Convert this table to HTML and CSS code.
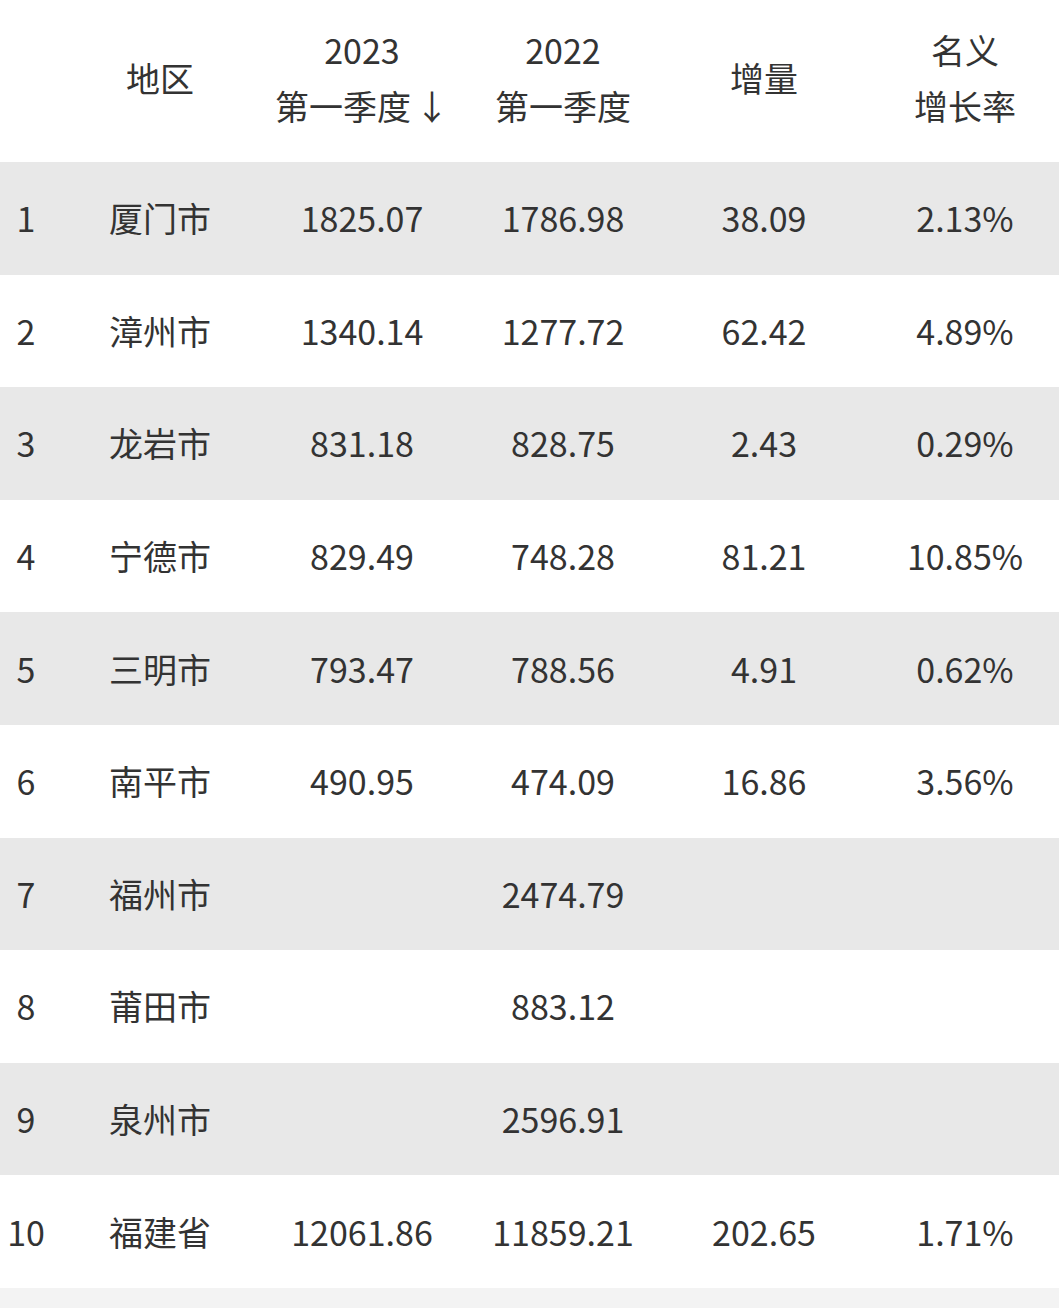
FILE: index.html
```html
<!DOCTYPE html>
<html lang="zh-CN">
<head>
<meta charset="utf-8">
<title>福建省 第一季度</title>
<link rel="stylesheet" href="styles.css">
</head>
<body>
<div class="table">
  <div class="row head">
    <div class="cell idx"></div>
    <div class="cell">地区</div>
    <div class="cell two"><span>2023</span><span>第一季度<span class="arrow">↓</span></span></div>
    <div class="cell two"><span>2022</span><span>第一季度</span></div>
    <div class="cell">增量</div>
    <div class="cell two"><span>名义</span><span>增长率</span></div>
  </div>
  <div class="row alt"><div class="cell idx">1</div><div class="cell">厦门市</div><div class="cell">1825.07</div><div class="cell">1786.98</div><div class="cell">38.09</div><div class="cell">2.13%</div></div>
  <div class="row"><div class="cell idx">2</div><div class="cell">漳州市</div><div class="cell">1340.14</div><div class="cell">1277.72</div><div class="cell">62.42</div><div class="cell">4.89%</div></div>
  <div class="row alt"><div class="cell idx">3</div><div class="cell">龙岩市</div><div class="cell">831.18</div><div class="cell">828.75</div><div class="cell">2.43</div><div class="cell">0.29%</div></div>
  <div class="row"><div class="cell idx">4</div><div class="cell">宁德市</div><div class="cell">829.49</div><div class="cell">748.28</div><div class="cell">81.21</div><div class="cell">10.85%</div></div>
  <div class="row alt"><div class="cell idx">5</div><div class="cell">三明市</div><div class="cell">793.47</div><div class="cell">788.56</div><div class="cell">4.91</div><div class="cell">0.62%</div></div>
  <div class="row"><div class="cell idx">6</div><div class="cell">南平市</div><div class="cell">490.95</div><div class="cell">474.09</div><div class="cell">16.86</div><div class="cell">3.56%</div></div>
  <div class="row alt"><div class="cell idx">7</div><div class="cell">福州市</div><div class="cell"></div><div class="cell">2474.79</div><div class="cell"></div><div class="cell"></div></div>
  <div class="row"><div class="cell idx">8</div><div class="cell">莆田市</div><div class="cell"></div><div class="cell">883.12</div><div class="cell"></div><div class="cell"></div></div>
  <div class="row alt"><div class="cell idx">9</div><div class="cell">泉州市</div><div class="cell"></div><div class="cell">2596.91</div><div class="cell"></div><div class="cell"></div></div>
  <div class="row"><div class="cell idx">10</div><div class="cell">福建省</div><div class="cell">12061.86</div><div class="cell">11859.21</div><div class="cell">202.65</div><div class="cell">1.71%</div></div>
  <div class="row foot"></div>
</div>
</body>
</html>
```
FILE: styles.css
```css
html, body {
  margin: 0;
  padding: 0;
  background: #ffffff;
  overflow: hidden;
}
body {
  font-family: "Noto Sans CJK SC", "Noto Sans", sans-serif;
  color: #333333;
  font-size: 34px;
}
.table {
  width: 1059px;
  overflow: hidden;
}
.row {
  display: grid;
  grid-template-columns: 52px 216px 188px 214px 188px 214px;
  height: 112.6px;
  align-items: center;
  background: #ffffff;
}
.row.alt {
  background: #e8e8e8;
}
.row.head {
  height: 162px;
  padding-bottom: 6px;
  box-sizing: border-box;
}
.row.foot {
  height: 21px;
  background: #f3f3f3;
}
.cell {
  text-align: center;
  white-space: nowrap;
  line-height: 56px;
}
.cell.two {
  display: flex;
  flex-direction: column;
  align-items: center;
}
.arrow {
  margin-left: 4px;
}
```
